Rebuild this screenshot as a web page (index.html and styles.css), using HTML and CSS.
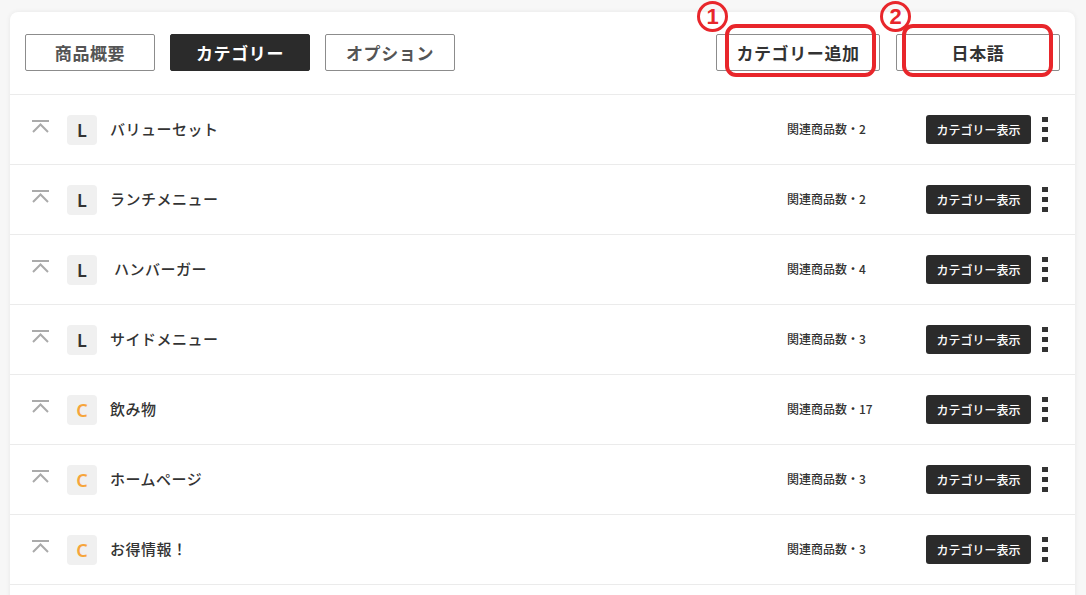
FILE: index.html
```html
<!DOCTYPE html>
<html lang="ja">

<head>
  <meta charset="UTF-8" />
  <meta name="viewport" content="width=device-width, initial-scale=1.0" />
  <title>カテゴリー</title>
  <link rel="stylesheet" href="styles.css">
</head>

<body>
  <div class="panel">
    <div class="toolbar">
      <div class="tabs">
        <button class="tab">商品概要</button>
        <button class="tab active">カテゴリー</button>
        <button class="tab">オプション</button>
      </div>
      <div class="actions">
        <button class="tab action">カテゴリー追加</button>
        <button class="tab action">日本語</button>
      </div>
    </div>

    <ul class="categories" id="categories"></ul>
  </div>

  <!-- annotations -->
  <span class="mark mark1">1</span>
  <span class="mark mark2">2</span>
  <span class="ring ring1"></span>
  <span class="ring ring2"></span>

  <script>
    const categorias = [
      { tipo: "L", nombre: "バリューセット", cantidad: 2 },
      { tipo: "L", nombre: "ランチメニュー", cantidad: 2 },
      { tipo: "L", nombre: "\u00a0ハンバーガー", cantidad: 4 },
      { tipo: "L", nombre: "サイドメニュー", cantidad: 3 },
      { tipo: "C", nombre: "飲み物", cantidad: 17 },
      { tipo: "C", nombre: "ホームページ", cantidad: 3 },
      { tipo: "C", nombre: "お得情報！", cantidad: 3 },
    ];

    const lista = document.getElementById("categories");
    categorias.forEach((cat) => {
      const li = document.createElement("li");
      li.className = "row";
      li.innerHTML = `
        <svg class="totop" width="17" height="13" viewBox="0 0 17 13">
          <rect x="0" y="0" width="17" height="2" fill="#aaa" />
          <polyline points="1,12 8.5,4.5 16,12" fill="none" stroke="#aaa" stroke-width="2" />
        </svg>
        <span class="badge ${cat.tipo === "C" ? "badge-c" : ""}">${cat.tipo}</span>
        <span class="name">${cat.nombre}</span>
        <span class="count">関連商品数・${cat.cantidad}</span>
        <button class="show">カテゴリー表示</button>
        <span class="kebab"><i></i><i></i><i></i></span>`;
      lista.appendChild(li);
    });
  </script>
</body>

</html>
```

FILE: styles.css
```css
body {
  margin: 0;
  background: #f7f7f7;
  font-family: "Noto Sans CJK JP", "Noto Sans", sans-serif;
  color: #333;
  overflow: hidden;
}

.panel {
  margin: 12px 11px 0 10px;
  padding-bottom: 40px;
  background: #fff;
  border-radius: 8px 8px 0 0;
  box-shadow: 0 0 5px rgba(0, 0, 0, 0.07);
}

.toolbar {
  display: flex;
  justify-content: space-between;
  padding: 22px 15px 23px 15px;
  border-bottom: 1px solid #ebebeb;
}

.tabs,
.actions {
  display: flex;
  gap: 15px;
}

.actions {
  gap: 16px;
}

.tab {
  height: 37px;
  width: 130px;
  padding: 0;
  font-family: inherit;
  font-size: 17px;
  font-weight: 700;
  letter-spacing: 0.6px;
  color: #555;
  background: #fff;
  border: 1px solid #8c8c8c;
  border-radius: 2px;
}

.tab.active {
  width: 140px;
  background: #2b2b2b;
  border-color: #2b2b2b;
  color: #fff;
}

.tab.action {
  width: 164px;
  color: #333;
}

.categories {
  list-style: none;
  margin: 0;
  padding: 0;
}

.row {
  display: flex;
  align-items: center;
  height: 69px;
  padding: 0 27px 0 22px;
  border-bottom: 1px solid #ebebeb;
}

.totop {
  flex: none;
  margin-top: -6px;
}

.badge {
  flex: none;
  width: 30px;
  height: 30px;
  margin-left: 18px;
  border-radius: 4px;
  background: #f0f0f0;
  display: flex;
  align-items: center;
  justify-content: center;
  font-family: "Noto Sans", sans-serif;
  font-size: 18px;
  font-weight: 600;
  line-height: 1;
  color: #333;
}

.badge-c {
  color: #f6a53b;
}

.name {
  flex: 1;
  margin-left: 13px;
  margin-top: -2px;
  font-size: 15px;
  font-weight: 500;
  letter-spacing: 0.5px;
}

.count {
  width: 139px;
  margin-top: -2px;
  font-size: 12px;
  font-weight: 500;
}

.show {
  width: 105px;
  height: 29px;
  padding: 0;
  border: none;
  border-radius: 3px;
  background: #2b2b2b;
  color: #fff;
  font-family: inherit;
  font-size: 12px;
  font-weight: 500;
}

.kebab {
  display: flex;
  flex-direction: column;
  gap: 5px;
  margin-left: 11px;
}

.kebab i {
  display: block;
  width: 6px;
  height: 5px;
  background: #333;
}

.mark {
  position: absolute;
  top: 1px;
  width: 25px;
  height: 25px;
  border: 3px solid #e8262b;
  border-radius: 50%;
  color: #e8262b;
  font-family: "Liberation Sans", Arial, sans-serif;
  font-size: 22px;
  font-weight: 700;
  line-height: 25px;
  text-align: center;
}

.mark1 {
  left: 697px;
}

.mark2 {
  left: 880px;
}

.ring {
  position: absolute;
  top: 24px;
  width: 143px;
  height: 45px;
  border: 4px solid #e8262b;
  border-radius: 11px;
}

.ring1 {
  left: 725px;
}

.ring2 {
  left: 902px;
}
```
